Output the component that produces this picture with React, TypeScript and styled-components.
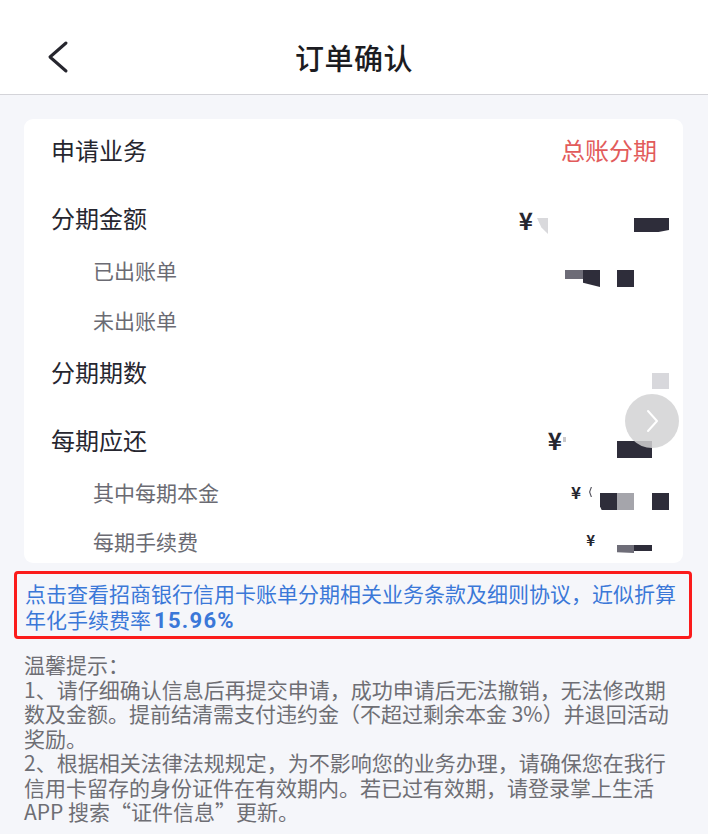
import * as React from 'react';
import styled, { createGlobalStyle } from 'styled-components';

const GlobalStyle = createGlobalStyle`
  html, body {
    margin: 0;
    padding: 0;
    background: #f5f6fa;
  }
  body {
    font-family: 'Noto Sans CJK SC', 'Noto Sans', sans-serif;
    -webkit-font-smoothing: antialiased;
  }
`;

const Page = styled.div`
  width: 708px;
  min-height: 834px;
  background: #f5f6fa;
  overflow: hidden;
`;

const NavBar = styled.header`
  box-sizing: border-box;
  height: 95px;
  padding-top: 20px;
  background: #fff;
  border-bottom: 1px solid #d4d4d9;
  display: grid;
  grid-template-columns: 1fr auto 1fr;
  align-items: center;
`;

const BackButton = styled.button`
  justify-self: start;
  margin-left: 45px;
  padding: 0;
  border: 0;
  background: none;
  display: flex;
`;

const Title = styled.h1`
  margin: 0;
  font-size: 29px;
  font-weight: 500;
  color: #1c1c22;
  line-height: 34px;
  letter-spacing: 0.5px;
`;

const Card = styled.section`
  position: relative;
  margin: 24px 25px 0 24px;
  padding: 16px 14px 7px 27px;
  background: #fff;
  border-radius: 9px;
`;

const Row = styled.div<{ $gap: number }>`
  display: flex;
  align-items: flex-start;
  justify-content: space-between;
  height: 30px;
  margin-top: ${({ $gap }) => $gap}px;
`;

const Label = styled.span<{ $sub?: boolean }>`
  line-height: 30px;
  font-size: ${({ $sub }) => ($sub ? 21 : 24)}px;
  color: ${({ $sub }) => ($sub ? '#6b6b73' : '#26262f')};
  padding-left: ${({ $sub }) => ($sub ? 42 : 0)}px;
`;

const Accent = styled.span`
  line-height: 30px;
  font-size: 24px;
  color: #e25b5b;
  margin-right: 12px;
`;

const Value = styled.div`
  display: flex;
  align-items: flex-start;
  height: 30px;
`;

const Yen = styled.span<{ $size: number; $left: number; $top: number }>`
  font-size: ${({ $size }) => $size}px;
  line-height: 1;
  font-weight: 700;
  color: #26262f;
  margin-left: ${({ $left }) => $left}px;
  margin-top: ${({ $top }) => $top}px;
`;

const Block = styled.span<{ $w: number; $h: number; $c: string; $left: number; $top: number; $clip?: string }>`
  display: block;
  width: ${({ $w }) => $w}px;
  height: ${({ $h }) => $h}px;
  background: ${({ $c }) => $c};
  margin-left: ${({ $left }) => $left}px;
  margin-top: ${({ $top }) => $top}px;
  clip-path: ${({ $clip }) => $clip || 'none'};
`;

const NextBubble = styled.div`
  position: absolute;
  left: 601px;
  top: 275px;
  width: 54px;
  height: 54px;
  border-radius: 50%;
  background: rgba(210, 210, 212, 0.85);
  display: flex;
  align-items: center;
  justify-content: center;
`;

const Agreement = styled.div`
  margin: 8px 16px 0 14px;
  padding: 6px 8px 2px 8px;
  border: 3px solid #fb1b1b;
  border-radius: 4px;
  font-size: 21px;
  line-height: 26px;
  color: #3b78d8;
`;

const Rate = styled.span`
  font-family: Roboto, 'Liberation Sans', sans-serif;
  font-weight: 700;
  font-size: 22px;
  letter-spacing: 1.3px;
  margin-left: 3px;
`;

const Tips = styled.div`
  margin-top: 13px;
  padding: 0 24px;
  font-size: 21px;
  line-height: 24.5px;
  color: #6e6e74;
`;

const TipLine = styled.div`
  white-space: nowrap;
`;

const tips = [
  '温馨提示：',
  '1、请仔细确认信息后再提交申请，成功申请后无法撤销，无法修改期',
  '数及金额。提前结清需支付违约金（不超过剩余本金 3%）并退回活动',
  '奖励。',
  '2、根据相关法律法规规定，为不影响您的业务办理，请确保您在我行',
  '信用卡留存的身份证件在有效期内。若已过有效期，请登录掌上生活',
  'APP 搜索“证件信息”更新。',
];

const DARK = '#2e2d3a';

export default function App() {
  return (
    <>
      <GlobalStyle />
      <Page>
        <NavBar>
          <BackButton aria-label="返回">
            <svg width="26" height="34" viewBox="0 0 26 34">
              <path d="M21 3 L5 17 L21 31" fill="none" stroke="#26262e" strokeWidth="3" strokeLinecap="round" strokeLinejoin="round" />
            </svg>
          </BackButton>
          <Title>订单确认</Title>
          <span />
        </NavBar>

        <Card>
          <Row $gap={0}>
            <Label>申请业务</Label>
            <Accent>总账分期</Accent>
          </Row>

          <Row $gap={38}>
            <Label>分期金额</Label>
            <Value>
              <Yen $size={24} $left={0} $top={5}>¥</Yen>
              <Block $w={11} $h={16} $c="#d9d9dc" $left={4} $top={15} $clip="polygon(0 0, 100% 0, 100% 100%, 40% 60%)" />
              <Block $w={35} $h={14} $c={DARK} $left={86} $top={15} $clip="polygon(0 0, 100% 0, 100% 85%, 70% 100%, 0 100%)" />
            </Value>
          </Row>

          <Row $gap={22}>
            <Label $sub>已出账单</Label>
            <Value>
              <Block $w={18} $h={9} $c="#6d6c77" $left={0} $top={15} />
              <Block $w={17} $h={17} $c={DARK} $left={0} $top={15} $clip="polygon(0 0, 100% 0, 100% 100%, 0 75%)" />
              <Block $w={17} $h={17} $c={DARK} $left={17} $top={15} />
              <Block $w={35} $h={1} $c="transparent" $left={0} $top={0} />
            </Value>
          </Row>

          <Row $gap={20}>
            <Label $sub>未出账单</Label>
          </Row>

          <Row $gap={22}>
            <Label>分期期数</Label>
            <Value>
              <Block $w={17} $h={16} $c="#d8d8dc" $left={0} $top={16} />
            </Value>
          </Row>

          <Row $gap={38}>
            <Label>每期应还</Label>
            <Value>
              <Yen $size={24} $left={0} $top={3}>¥</Yen>
              <Block $w={3} $h={5} $c="#c9c9cc" $left={1} $top={12} />
              <Block $w={35} $h={17} $c={DARK} $left={51} $top={16} />
              <Block $w={17} $h={1} $c="transparent" $left={0} $top={0} />
            </Value>
          </Row>

          <Row $gap={22}>
            <Label $sub>其中每期本金</Label>
            <Value>
              <Yen $size={17} $left={0} $top={6}>¥</Yen>
              <Block $w={3} $h={10} $c="#55545e" $left={8} $top={10} $clip="polygon(60% 0, 100% 0, 40% 50%, 100% 100%, 60% 100%, 0 50%)" />
              <Block $w={17} $h={17} $c={DARK} $left={8} $top={16} $clip="polygon(0 0, 100% 0, 100% 100%, 10% 100%, 0 80%)" />
              <Block $w={17} $h={17} $c="#a5a5ab" $left={0} $top={16} />
              <Block $w={17} $h={17} $c={DARK} $left={18} $top={16} />
            </Value>
          </Row>

          <Row $gap={19}>
            <Label $sub>每期手续费</Label>
            <Value>
              <Yen $size={15} $left={0} $top={6}>¥</Yen>
              <Block $w={17} $h={8} $c="#6e6d78" $left={22} $top={19} $clip="polygon(0 0, 100% 0, 100% 100%, 0 90%)" />
              <Block $w={18} $h={6} $c={DARK} $left={0} $top={19} />
              <Block $w={17} $h={1} $c="transparent" $left={0} $top={0} />
            </Value>
          </Row>

          <NextBubble>
            <svg width="18" height="26" viewBox="0 0 18 26">
              <path d="M5 3 L14 13 L5 23" fill="none" stroke="#ffffff" strokeWidth="2" strokeLinecap="round" strokeLinejoin="round" />
            </svg>
          </NextBubble>
        </Card>

        <Agreement>
          点击查看招商银行信用卡账单分期相关业务条款及细则协议，近似折算
          <br />
          年化手续费率<Rate>15.96%</Rate>
        </Agreement>

        <Tips>
          {tips.map((line) => (
            <TipLine key={line}>{line}</TipLine>
          ))}
        </Tips>
      </Page>
    </>
  );
}
